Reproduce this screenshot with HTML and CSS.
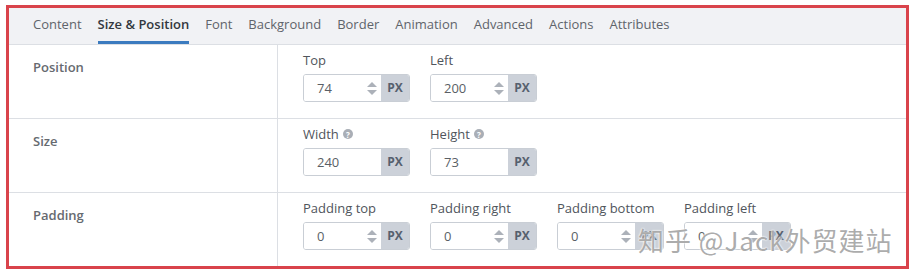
FILE: index.html
```html
<!DOCTYPE html>
<html lang="en">

<head>
    <meta charset="UTF-8">
    <title>Element settings</title>
    <link rel="stylesheet" href="styles.css">
</head>

<body>
    <div class="frame">
        <!-- Tabs -->
        <nav class="tabs">
            <span class="tab">Content</span>
            <span class="tab active">Size &amp; Position</span>
            <span class="tab">Font</span>
            <span class="tab">Background</span>
            <span class="tab">Border</span>
            <span class="tab">Animation</span>
            <span class="tab">Advanced</span>
            <span class="tab">Actions</span>
            <span class="tab">Attributes</span>
        </nav>

        <!-- Position -->
        <div class="row">
            <div class="row-label">Position</div>
            <div class="row-fields">
                <div class="field">
                    <label class="field-label">Top</label>
                    <div class="input">
                        <span class="value">74</span>
                        <span class="spin"><i class="up"></i><i class="down"></i></span>
                        <span class="unit">PX</span>
                    </div>
                </div>
                <div class="field">
                    <label class="field-label">Left</label>
                    <div class="input">
                        <span class="value">200</span>
                        <span class="spin"><i class="up"></i><i class="down"></i></span>
                        <span class="unit">PX</span>
                    </div>
                </div>
            </div>
        </div>

        <!-- Size -->
        <div class="row">
            <div class="row-label">Size</div>
            <div class="row-fields">
                <div class="field">
                    <label class="field-label">Width <span class="help">?</span></label>
                    <div class="input">
                        <span class="value">240</span>
                        <span class="unit">PX</span>
                    </div>
                </div>
                <div class="field">
                    <label class="field-label">Height <span class="help">?</span></label>
                    <div class="input">
                        <span class="value">73</span>
                        <span class="unit">PX</span>
                    </div>
                </div>
            </div>
        </div>

        <!-- Padding -->
        <div class="row last">
            <div class="row-label">Padding</div>
            <div class="row-fields">
                <div class="field">
                    <label class="field-label">Padding top</label>
                    <div class="input">
                        <span class="value">0</span>
                        <span class="spin"><i class="up"></i><i class="down"></i></span>
                        <span class="unit">PX</span>
                    </div>
                </div>
                <div class="field">
                    <label class="field-label">Padding right</label>
                    <div class="input">
                        <span class="value">0</span>
                        <span class="spin"><i class="up"></i><i class="down"></i></span>
                        <span class="unit">PX</span>
                    </div>
                </div>
                <div class="field">
                    <label class="field-label">Padding bottom</label>
                    <div class="input">
                        <span class="value">0</span>
                        <span class="spin"><i class="up"></i><i class="down"></i></span>
                        <span class="unit">PX</span>
                    </div>
                </div>
                <div class="field">
                    <label class="field-label">Padding left</label>
                    <div class="input">
                        <span class="value">0</span>
                        <span class="spin"><i class="up"></i><i class="down"></i></span>
                        <span class="unit">PX</span>
                    </div>
                </div>
            </div>
        </div>

        <!-- Watermark -->
        <div class="watermark">知乎 @Jack外贸建站</div>
    </div>
</body>

</html>
```

FILE: styles.css
```css
body {
    margin: 0;
    background-color: #ffffff;
    font-family: 'Open Sans', sans-serif;
    font-size: 13px;
    color: #555a60;
}

.frame {
    position: relative;
    margin: 5px 0 0 6px;
    width: 897px;
    border: 3px solid #d9434b;
    background-color: #ffffff;
}

.tabs {
    display: flex;
    height: 36px;
    padding-left: 16px;
    background-color: #f1f2f5;
    border-bottom: 1px solid #dcdfe4;
}

.tab {
    position: relative;
    margin: 0 8px;
    line-height: 33px;
    color: #5f646b;
    white-space: nowrap;
}

.tab.active {
    font-weight: 600;
    color: #333840;
}

.tab.active::after {
    content: '';
    position: absolute;
    left: 0;
    right: 0;
    bottom: 0;
    height: 3px;
    background-color: #3b7bbf;
}

.row {
    display: flex;
    height: 73px;
    border-bottom: 1px solid #dcdfe4;
}

.row.last {
    height: 73px;
    border-bottom: none;
}

.row-label {
    width: 244px;
    padding: 13px 0 0 24px;
    border-right: 1px solid #dcdfe4;
    font-weight: 600;
    color: #666a70;
    line-height: 18px;
}

.row-fields {
    display: flex;
    gap: 20px;
    padding: 6px 0 0 25px;
}

.field {
    width: 107px;
}

.field-label {
    display: flex;
    align-items: center;
    gap: 4px;
    height: 18px;
    margin-bottom: 5px;
    color: #50555c;
}

.help {
    display: inline-flex;
    align-items: center;
    justify-content: center;
    width: 10px;
    height: 10px;
    border-radius: 50%;
    background-color: #a9aeb6;
    color: #ffffff;
    font-size: 8px;
    font-weight: 700;
}

.input {
    display: flex;
    height: 26px;
    border: 1px solid #c9ced5;
    border-radius: 3px;
    overflow: hidden;
}

.value {
    flex: 1;
    padding-left: 13px;
    line-height: 26px;
    color: #5a5f66;
    background-color: #ffffff;
}

.spin {
    display: flex;
    flex-direction: column;
    justify-content: center;
    gap: 3px;
    width: 14px;
    background-color: #ffffff;
}

.spin i {
    display: block;
    width: 0;
    height: 0;
    border-left: 5px solid transparent;
    border-right: 5px solid transparent;
}

.spin .up {
    border-bottom: 5px solid #acb1b9;
}

.spin .down {
    border-top: 5px solid #acb1b9;
}

.unit {
    width: 28px;
    line-height: 26px;
    text-align: center;
    font-size: 12px;
    font-weight: 700;
    color: #56606e;
    background-color: #ccd1d9;
}

.watermark {
    position: absolute;
    left: 629px;
    top: 213px;
    font-family: 'Noto Sans CJK SC', sans-serif;
    font-size: 26px;
    letter-spacing: 1px;
    color: rgba(150, 150, 150, 0.8);
    text-shadow: 0 0 2px #ffffff, 0 0 2px #ffffff;
    pointer-events: none;
}
```
